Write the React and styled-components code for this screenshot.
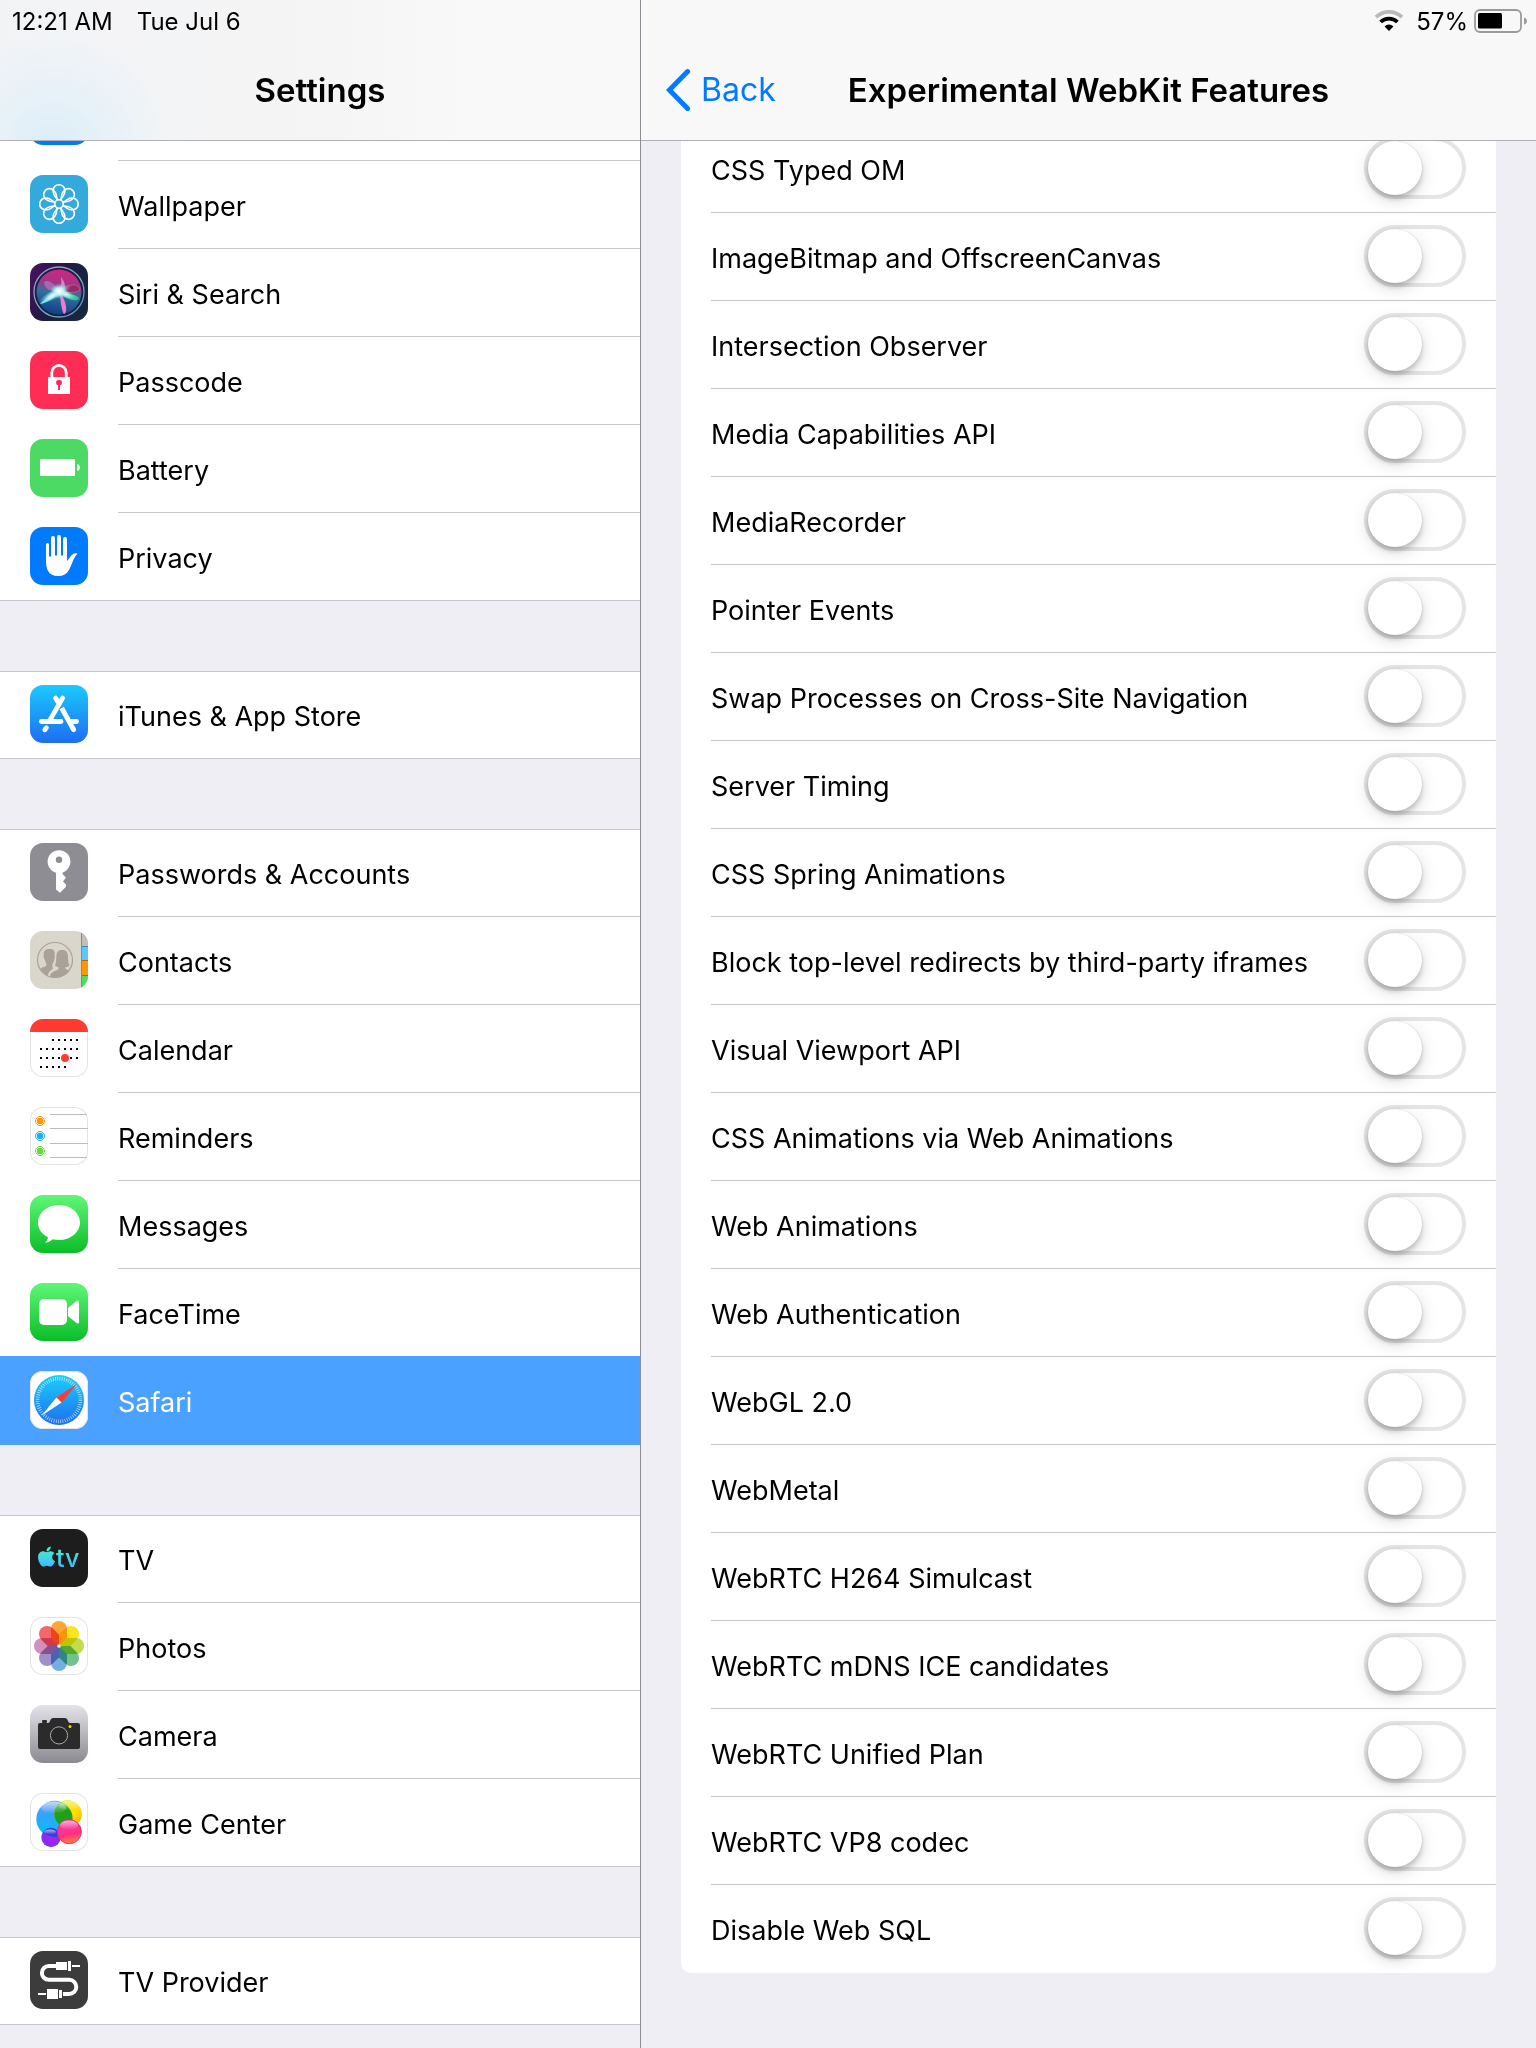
import React from "react";
import styled, { createGlobalStyle } from "styled-components";
import { FaApple } from "react-icons/fa";

const GlobalStyle = createGlobalStyle`
  * {
    box-sizing: border-box;
  }

  body {
    margin: 0;
    background: #efeef5;
    color: #000000;
    font-family: Inter, "Liberation Sans", sans-serif;
    font-size: 27px;
  }
`;

const Screen = styled.div`
  display: grid;
  grid-template-columns: minmax(0, 5fr) minmax(0, 7fr);
  min-height: 100vh;
`;

const Pane = styled.section`
  display: flex;
  flex-direction: column;
  border-left: ${props => (props.$divided ? "1px solid #8e8d93" : "none")};
`;

const Header = styled.header`
  border-bottom: 1px solid #b0afb3;
  background: ${props =>
    props.$tinted
      ? "radial-gradient(circle at 54px 150px, #d8edf7 0, #e6f1f9 50px, rgba(240, 243, 248, 0) 120px), linear-gradient(90deg, #f2f3f5 0, #f5f5f5 50%, #f9f9f9 75%)"
      : "#f8f8f8"};
`;

const StatusBar = styled.div`
  display: flex;
  align-items: center;
  justify-content: ${props => props.$align || "flex-start"};
  height: 42px;
  padding: 0 8px 0 12px;
  font-size: 24px;
`;

const Clock = styled.span`
  margin-right: 24px;
`;

const Charge = styled.span`
  margin: 0 6px 0 12px;
`;

const NavBar = styled.div`
  display: grid;
  grid-template-columns: 1fr auto 1fr;
  align-items: center;
  height: 98px;
  padding: 0 25px 2px;
`;

const Title = styled.h1`
  grid-column: 2;
  margin: 0;
  font-size: 33px;
  font-weight: 600;
  line-height: 40px;
`;

const BackButton = styled.button`
  display: flex;
  align-items: center;
  justify-self: start;
  gap: 8px;
  padding: 0;
  border: 0;
  background: none;
  color: #007aff;
  font: inherit;
  font-size: 32px;
  line-height: 40px;
`;

const Menu = styled.nav`
  display: flex;
  flex-direction: column;
  gap: 70px;
`;

const Group = styled.div`
  background: #ffffff;
  box-shadow: inset 0 ${props => (props.$continued ? "0" : "1px")} 0 #c8c7cc,
    inset 0 -1px 0 #c8c7cc;
`;

const RowLabel = styled.span`
  flex: 1;
  padding-bottom: 24px;
  border-bottom: 1px solid #c8c7cc;
  line-height: 34px;
`;

const MenuRow = styled.a`
  display: flex;
  align-items: flex-end;
  height: ${props => (props.$peek ? "20px" : "88px")};
  padding-left: 30px;
  overflow: hidden;
  color: inherit;
  text-decoration: none;

  &:last-child ${RowLabel} {
    border-bottom-color: transparent;
  }
`;

/* the highlight also covers the hairline above it */
const ActiveRow = styled(MenuRow)`
  isolation: isolate;
  height: 89px;
  margin-top: -1px;
  background: #4ba1ff;
  color: #ffffff;
`;

const AppIcon = styled.svg`
  flex: none;
  width: 58px;
  height: 58px;
  margin: 0 30px 16px 0;
  border-radius: 13px;
  background: ${props => props.$background};
`;

const OutlinedIcon = styled(AppIcon)`
  box-shadow: 0 0 0 1px #e4e4e6 inset;
`;

const Card = styled.div`
  margin: 0 40px;
  padding-left: 30px;
  border-radius: 0 0 10px 10px;
  background: #ffffff;
`;

const FeatureRow = styled.div`
  display: flex;
  align-items: flex-end;
  height: ${props => (props.$peek ? "72px" : "88px")};
  padding-right: 30px;
  border-bottom: 1px solid #c8c7cc;
  overflow: ${props => (props.$peek ? "hidden" : "visible")};

  &:last-child {
    border-bottom-color: transparent;
  }
`;

const FeatureLabel = styled.label`
  flex: 1;
  padding-bottom: 24px;
  line-height: 34px;
`;

const Switch = styled.input`
  appearance: none;
  flex: none;
  width: 102px;
  height: 62px;
  margin: 0 0 13px;
  border: 4px solid #e5e5e5;
  border-radius: 31px;
  background: #ffffff;

  &::before {
    content: "";
    display: block;
    width: 54px;
    height: 54px;
    border-radius: 50%;
    background: #ffffff;
    box-shadow: 0 0 1px rgba(0, 0, 0, 0.2), 0 4px 5px rgba(0, 0, 0, 0.18),
      0 5px 18px rgba(0, 0, 0, 0.14);
  }

  &:checked {
    border-color: #4cd964;
    background: #4cd964;
  }

  &:checked::before {
    margin-left: auto;
  }
`;

const EIGHTHS = [0, 45, 90, 135, 180, 225, 270, 315];

const WallpaperIcon = () => (
  <AppIcon viewBox="0 0 58 58" $background="#34aadc">
    <g fill="none" stroke="#fff" strokeWidth="1.6" strokeLinejoin="round">
      {EIGHTHS.map(angle => (
        <path
          key={angle}
          d="M27.6 25 L24.4 20.4 Q23.1 18.4 23.1 15.6 A5.9 5.9 0 1 1 34.9 15.6 Q34.9 18.4 33.6 20.4 L30.4 25"
          transform={`rotate(${angle} 29 29)`}
        />
      ))}
      <circle cx="29" cy="29" r="4.2" />
    </g>
  </AppIcon>
);

const SiriIcon = () => (
  <AppIcon viewBox="0 0 58 58" $background="linear-gradient(115deg, #4a1260 0%, #1f1a45 45%, #132b3f 100%)">
    <defs>
      <linearGradient id="siriOrb" x1="0.6" y1="0" x2="0.4" y2="1">
        <stop offset="0" stopColor="#d3257f" />
        <stop offset="0.32" stopColor="#a03688" />
        <stop offset="0.55" stopColor="#31709c" />
        <stop offset="1" stopColor="#123c86" />
      </linearGradient>
      <linearGradient id="siriRing" x1="0" y1="0" x2="1" y2="1">
        <stop offset="0" stopColor="#b08bd0" />
        <stop offset="0.6" stopColor="#69b9a8" />
        <stop offset="1" stopColor="#5d7fbe" />
      </linearGradient>
      <radialGradient id="siriGlow">
        <stop offset="0" stopColor="#fff" />
        <stop offset="0.45" stopColor="#c9f8f8" stopOpacity="0.8" />
        <stop offset="1" stopColor="#6fd6e8" stopOpacity="0" />
      </radialGradient>
    </defs>
    <circle cx="29" cy="29" r="25" fill="#1b1c48" stroke="url(#siriRing)" strokeWidth="1.3" />
    <circle cx="29" cy="29" r="22.5" fill="url(#siriOrb)" />
    <path d="M29 29 C38 20 49 20 50 27 C45 31 36 29 29 29Z" fill="#93295d" stroke="#e28bb5" strokeWidth="0.5" opacity="0.8" />
    <path d="M29 28 C22 16 14 17 14 20 C15 27 22 29 29 28Z" fill="#c783c9" opacity="0.55" />
    <path d="M29 28 C24 30 14 36 10 41 C17 40 25 35 29 28Z" fill="#5be9ec" />
    <path d="M29 28 C33 34 43 40 49 36 C48 31 36 31 29 28Z" fill="#2fc991" />
    <path d="M29 28 C31 37 31 47 34 51 C38 50 37 38 29 28Z" fill="#e77ed0" />
    <path d="M28 30 C31 24 32 20 31 14 C36 20 36 26 33 30Z" fill="#ee9bd0" opacity="0.75" />
    <ellipse cx="25" cy="31" rx="18" ry="5" fill="url(#siriGlow)" transform="rotate(-28 25 31)" />
    <ellipse cx="33" cy="30" rx="14" ry="4.5" fill="url(#siriGlow)" transform="rotate(22 33 30)" />
    <circle cx="29" cy="28" r="8" fill="url(#siriGlow)" />
  </AppIcon>
);

const PasscodeIcon = () => (
  <AppIcon viewBox="0 0 58 58" $background="#ff2d55">
    <path d="M21.8 27 V21.5 A7.2 7.2 0 0 1 36.2 21.5 V27" fill="none" stroke="#fff" strokeWidth="2.8" />
    <rect x="18" y="26" width="22" height="17" fill="#fff" />
    <circle cx="29" cy="31.6" r="2.9" fill="#ff2d55" />
    <rect x="28" y="32" width="2" height="7" fill="#ff2d55" />
  </AppIcon>
);

const BatteryIcon = () => (
  <AppIcon viewBox="0 0 58 58" $background="#4cd964">
    <rect x="10" y="20" width="35" height="17" rx="1" fill="#fff" />
    <path d="M47 25 C51 26 51 31 47 32Z" fill="#fff" />
  </AppIcon>
);

const PrivacyIcon = () => (
  <AppIcon viewBox="0 0 58 58" $background="#007aff">
    <path
      fill="#fff"
      d="M16 17.4 a1.5 1.5 0 0 1 3 0 V29.5 H21 V11 a2 2 0 0 1 4 0 V28.5 H27 V10 a2 2 0 0 1 4 0 V28.5 H33 V12 a2 2 0 0 1 4 0 V34 L41.5 28.2 Q44 25.5 47.5 26.4 Q45 29 43.5 32.5 Q41 39 39 43 Q35.5 49 28.5 49 Q20 49 17.5 43 Q16 39.5 16 34Z"
    />
  </AppIcon>
);

const StoreIcon = () => (
  <AppIcon viewBox="0 0 58 58" $background="linear-gradient(#1bcafc, #1d6df1)">
    <g fill="none" stroke="#fff" strokeWidth="4.8" strokeLinecap="round">
      <path d="M32.6 13 L20.3 34.4 M25.6 13 L28.4 17.8" />
      <path d="M31.7 23 L43.5 44.5" strokeLinecap="butt" />
      <path d="M43 43.5 L43.7 44.7" />
      <path d="M11.4 36.5 H31 M41.5 36.5 H46.6" />
      <path d="M16.4 42.8 L14.8 44.8" />
    </g>
  </AppIcon>
);

const KeyIcon = () => (
  <AppIcon viewBox="0 0 58 58" $background="#8e8d93">
    <circle cx="29" cy="18.6" r="11.4" fill="#fff" />
    <path d="M26 28 H32.5 V31 L36 34.5 L33 38.5 L36 41.5 V43.8 L30 49.8 L26 46.5Z" fill="#fff" />
    <circle cx="29" cy="16.8" r="3.2" fill="#8e8d93" />
  </AppIcon>
);

const ContactsIcon = () => (
  <AppIcon viewBox="0 0 58 58" $background="#d9d6cb">
    <rect x="51" width="7" height="15" fill="#c2bdb6" />
    <rect x="51" y="15" width="7" height="14" fill="#5ac8fa" />
    <rect x="51" y="29" width="7" height="15" fill="#ff9500" />
    <rect x="51" y="44" width="7" height="14" fill="#4cd964" />
    <path d="M51.5 2 V56" stroke="#8b8982" strokeWidth="1" />
    <path d="M52 15.5 H58 M52 29.5 H58 M52 44.5 H58" stroke="#000" strokeOpacity="0.3" strokeWidth="1" />
    <circle cx="25" cy="29" r="17.5" fill="none" stroke="#aaa298" strokeWidth="1.2" />
    <g fill="#aaa298">
      <path d="M19 18 C15 18 13.4 20.5 13.8 24 C13.2 25 14 28 15 29 C15.5 31.5 16.4 32.5 16.5 34 C16 36 12.5 36 10.5 37.5 Q13.5 43 18 45 C18 40 22 39 23 37.5 C22 35.5 22 33.5 23.5 31 C24.5 28 25.2 26 24.5 24 C25.5 20 23.5 17.5 19 18Z" />
      <path d="M32 19 C36 18.5 37.8 21 38 26 C38 30 38.6 33 39.5 34.5 C38 36 35.6 36 35 36.5 C35 38.5 38.5 38.5 39.5 39.5 C36 44.5 30.5 46.5 25 46.5 Q22 46.3 20 45.4 C20.5 40 27 40 28.5 38 V36.2 Q26 36 25 34.6 C26.5 31 26 28.5 26.4 25 C26.6 21 28.5 18.8 32 19Z" />
    </g>
  </AppIcon>
);

const CALENDAR_DOTS = [
  { y: 20, from: 2, to: 6 },
  { y: 29, from: 0, to: 6 },
  { y: 38, from: 0, to: 6 },
  { y: 47, from: 0, to: 4 }
];

const CalendarIcon = () => (
  <OutlinedIcon viewBox="0 0 58 58" $background="#fff">
    <rect width="58" height="13" fill="#ff3b30" />
    {CALENDAR_DOTS.map(row =>
      [0, 1, 2, 3, 4, 5, 6]
        .filter(col => col >= row.from && col <= row.to)
        .map(col => <rect key={`${row.y}-${col}`} x={10 + col * 6} y={row.y} width="2" height="2" />)
    )}
    <circle cx="35" cy="39" r="4" fill="#ff3b30" />
  </OutlinedIcon>
);

const RemindersIcon = () => (
  <OutlinedIcon viewBox="0 0 58 58" $background="#fff">
    <path d="M20 7.5 H57 M20 21.5 H58 M20 36.5 H58 M20 50.5 H57" stroke="#bdbdc1" />
    {[["#ff9500", 14], ["#1badf8", 29], ["#63da38", 44]].map(([color, y]) => (
      <g key={color}>
        <circle cx="10" cy={y} r="4.5" fill="none" stroke={color} strokeWidth="1" />
        <circle cx="10" cy={y} r="3.2" fill={color} />
      </g>
    ))}
  </OutlinedIcon>
);

const MessagesIcon = () => (
  <AppIcon viewBox="0 0 58 58" $background="linear-gradient(#5ff777, #0bbd29)">
    <path
      fill="#fff"
      d="M29 10 C40.6 10 50 17.8 50 27.5 S40.6 45 29 45 Q25.5 45 22.8 44.3 Q19.5 47.5 15.2 47.8 Q17.8 45.5 18 42.3 C11.8 39.3 8 33.8 8 27.5 C8 17.8 17.4 10 29 10Z"
    />
  </AppIcon>
);

const FaceTimeIcon = () => (
  <AppIcon viewBox="0 0 58 58" $background="linear-gradient(#5ff777, #0bbd29)">
    <rect x="9" y="16" width="28" height="26" rx="5" fill="#fff" />
    <path d="M38 26 Q38 24.8 39 24 L46.6 18 Q49 16.6 49 19 V39 Q49 41.4 46.6 40 L39 34 Q38 33.2 38 32Z" fill="#fff" />
  </AppIcon>
);

const SafariIcon = () => (
  <OutlinedIcon viewBox="0 0 58 58" $background="#fff">
    <defs>
      <linearGradient id="safariDial" x1="0" y1="0" x2="0" y2="1">
        <stop offset="0" stopColor="#1bcffb" />
        <stop offset="1" stopColor="#1e6ef1" />
      </linearGradient>
    </defs>
    <circle cx="29" cy="29" r="25" fill="url(#safariDial)" />
    <circle cx="29" cy="29" r="21.4" fill="none" stroke="#fff" strokeWidth="3.6" strokeDasharray="0.7 1.54" opacity="0.75" />
    <path d="M47 13 L26.4 26.4 L31.6 31.6Z" fill="#ff3b30" />
    <path d="M11.5 44.8 L26.4 26.4 L31.6 31.6Z" fill="#fff" />
  </OutlinedIcon>
);

const TvWord = styled.text`
  font-family: Inter, sans-serif;
  font-size: 25px;
  font-weight: 500;
`;

const TvIcon = () => (
  <AppIcon viewBox="0 0 58 58" $background="#1d1d1d">
    <defs>
      <linearGradient id="tvInk" gradientUnits="userSpaceOnUse" x1="0" y1="18" x2="0" y2="38">
        <stop offset="0" stopColor="#4df2c5" />
        <stop offset="1" stopColor="#3fb9ff" />
      </linearGradient>
      <linearGradient id="tvApple" x1="0" y1="0" x2="0" y2="1">
        <stop offset="0" stopColor="#4df2c5" />
        <stop offset="1" stopColor="#3fb9ff" />
      </linearGradient>
    </defs>
    <FaApple x="5" y="16" size="23" fill="url(#tvApple)" />
    <TvWord x="26" y="38" fill="url(#tvInk)">tv</TvWord>
  </AppIcon>
);

const Petal = styled.path`
  mix-blend-mode: multiply;
`;

const PETAL_COLORS = ["#fba636", "#fae420", "#c1dc4c", "#6fc48e", "#74afe2", "#a28fc9", "#d38fbd", "#f4686a"];

const PhotosIcon = () => (
  <OutlinedIcon viewBox="0 0 58 58" $background="#fff">
    {PETAL_COLORS.map((color, i) => (
      <Petal
        key={color}
        d="M29 29 L21 21 V12 A8 8 0 0 1 37 12 V21Z"
        fill={color}
        transform={`rotate(${i * 45} 29 29)`}
      />
    ))}
    <circle cx="29" cy="29" r="1.8" fill="#fff" />
  </OutlinedIcon>
);

const CameraIcon = () => (
  <AppIcon viewBox="0 0 58 58" $background="linear-gradient(#e4e3e9, #8b8a90)">
    <rect x="12" y="15" width="5" height="3" rx="1" fill="#2b2b2b" />
    <path
      d="M10 18 H18 Q19.5 18 20 16 Q20.8 13 23 13 H35 Q37.2 13 38 16 Q38.5 18 40 18 H48 Q50 18 50 20 V42 Q50 44 48 44 H10 Q8 44 8 42 V20 Q8 18 10 18Z"
      fill="#2b2b2b"
    />
    <circle cx="29" cy="30.4" r="8.6" fill="#262626" stroke="#a9a9ac" strokeWidth="1" />
    <circle cx="40" cy="21.5" r="1.5" fill="#ffcc00" />
  </AppIcon>
);

const GameCenterIcon = () => (
  <OutlinedIcon viewBox="0 0 58 58" $background="#fff">
    <defs>
      <linearGradient id="gcBlue" x1="0" y1="0" x2="0" y2="1">
        <stop offset="0" stopColor="#7d9cf0" />
        <stop offset="0.4" stopColor="#2fa4fb" />
        <stop offset="1" stopColor="#00c3ff" />
      </linearGradient>
      <linearGradient id="gcYellow" x1="0" y1="0" x2="1" y2="1">
        <stop offset="0" stopColor="#d3ea00" />
        <stop offset="0.6" stopColor="#ffde00" />
        <stop offset="1" stopColor="#f5a600" />
      </linearGradient>
      <linearGradient id="gcPink" x1="0.4" y1="0" x2="0.6" y2="1">
        <stop offset="0" stopColor="#f63fb4" />
        <stop offset="0.6" stopColor="#ff2f80" />
        <stop offset="1" stopColor="#ff8740" />
      </linearGradient>
      <radialGradient id="gcPurple">
        <stop offset="0" stopColor="#b81cf8" />
        <stop offset="0.6" stopColor="#9a22f2" />
        <stop offset="1" stopColor="#6a3ff0" />
      </radialGradient>
      <linearGradient id="gcShine" x1="0" y1="0" x2="0" y2="1">
        <stop offset="0" stopColor="#fff" stopOpacity="0.6" />
        <stop offset="1" stopColor="#fff" stopOpacity="0" />
      </linearGradient>
      <clipPath id="gcBlueClip">
        <circle cx="24.5" cy="26" r="18.2" />
      </clipPath>
    </defs>
    <circle cx="21" cy="44.5" r="9.7" fill="url(#gcPurple)" />
    <circle cx="24.5" cy="26" r="18.2" fill="url(#gcBlue)" />
    <circle cx="38" cy="21" r="13.8" fill="url(#gcYellow)" />
    <g clipPath="url(#gcBlueClip)">
      <circle cx="38" cy="21" r="13.8" fill="#1f9f1b" />
      <circle cx="21" cy="44.5" r="9.7" fill="#3b3fd8" />
    </g>
    <ellipse cx="24" cy="14.5" rx="12.5" ry="6" fill="url(#gcShine)" />
    <ellipse cx="39" cy="12.5" rx="10" ry="4.8" fill="url(#gcShine)" />
    <circle cx="39.3" cy="38.7" r="12.3" fill="url(#gcPink)" />
    <circle cx="39.3" cy="38.7" r="12" fill="none" stroke="#e11d62" strokeWidth="0.6" />
    <ellipse cx="39" cy="32" rx="9" ry="4.5" fill="url(#gcShine)" />
    <ellipse cx="20" cy="39" rx="6" ry="2.5" fill="url(#gcShine)" />
  </OutlinedIcon>
);

const ProviderIcon = () => (
  <AppIcon viewBox="0 0 58 58" $background="#3c3c3c">
    <path
      d="M26 15 H18.8 A6.9 6.9 0 0 0 18.8 28.8 H39.2 A7.1 7.1 0 0 1 39.2 43 H33"
      fill="none"
      stroke="#fff"
      strokeWidth="4"
    />
    <g fill="#fff">
      <rect x="26" y="11" width="11" height="8" />
      <rect x="38" y="10" width="3" height="10" />
      <rect x="42" y="14" width="8" height="2" />
      <rect x="17" y="38" width="11" height="10" />
      <rect x="29" y="39" width="3" height="8" />
      <rect x="8" y="42" width="8" height="2" />
    </g>
  </AppIcon>
);

const DisplayIcon = () => <AppIcon viewBox="0 0 58 58" $background="#007aff" />;

const Wifi = () => (
  <svg width="30" height="22" viewBox="0 0 30 22" role="img" aria-label="Wi-Fi">
    <path d="M2 7.2 A18.5 18.5 0 0 1 28 7.2" fill="none" stroke="#b9b9b9" strokeWidth="3.8" />
    <path d="M6.6 12 A12 12 0 0 1 23.4 12" fill="none" stroke="#000" strokeWidth="3.8" />
    <path d="M15 21 L10.6 16.4 A6.3 6.3 0 0 1 19.4 16.4Z" />
  </svg>
);

const BatteryLevel = () => (
  <svg width="54" height="24" viewBox="0 0 54 24" role="img" aria-label="Battery">
    <rect x="1" y="1" width="46" height="22" rx="5" fill="none" stroke="#9b9b9b" strokeWidth="1.8" />
    <rect x="4" y="4" width="24" height="15.5" rx="1.5" />
    <path d="M50 8.5 C54 9.5 54 14.5 50 15.5Z" fill="#9b9b9b" />
  </svg>
);

const Chevron = () => (
  <svg width="27" height="44" viewBox="0 0 27 44" aria-hidden="true">
    <path d="M21.6 3.6 L3.4 22 L21.6 40.4" fill="none" stroke="#007aff" strokeWidth="5" strokeLinecap="round" />
  </svg>
);

const GROUPS = [
  [
    { name: "Display & Brightness", Icon: DisplayIcon, peek: true },
    { name: "Wallpaper", Icon: WallpaperIcon },
    { name: "Siri & Search", Icon: SiriIcon },
    { name: "Passcode", Icon: PasscodeIcon },
    { name: "Battery", Icon: BatteryIcon },
    { name: "Privacy", Icon: PrivacyIcon }
  ],
  [{ name: "iTunes & App Store", Icon: StoreIcon }],
  [
    { name: "Passwords & Accounts", Icon: KeyIcon },
    { name: "Contacts", Icon: ContactsIcon },
    { name: "Calendar", Icon: CalendarIcon },
    { name: "Reminders", Icon: RemindersIcon },
    { name: "Messages", Icon: MessagesIcon },
    { name: "FaceTime", Icon: FaceTimeIcon },
    { name: "Safari", Icon: SafariIcon, active: true }
  ],
  [
    { name: "TV", Icon: TvIcon },
    { name: "Photos", Icon: PhotosIcon },
    { name: "Camera", Icon: CameraIcon },
    { name: "Game Center", Icon: GameCenterIcon }
  ],
  [{ name: "TV Provider", Icon: ProviderIcon }]
];

const FEATURES = [
  "CSS Typed OM",
  "ImageBitmap and OffscreenCanvas",
  "Intersection Observer",
  "Media Capabilities API",
  "MediaRecorder",
  "Pointer Events",
  "Swap Processes on Cross-Site Navigation",
  "Server Timing",
  "CSS Spring Animations",
  "Block top-level redirects by third-party iframes",
  "Visual Viewport API",
  "CSS Animations via Web Animations",
  "Web Animations",
  "Web Authentication",
  "WebGL 2.0",
  "WebMetal",
  "WebRTC H264 Simulcast",
  "WebRTC mDNS ICE candidates",
  "WebRTC Unified Plan",
  "WebRTC VP8 codec",
  "Disable Web SQL"
];

const MenuItem = ({ name, Icon, active, peek }) => {
  const Row = active ? ActiveRow : MenuRow;
  return (
    <Row href="#" $peek={peek} aria-label={name}>
      <Icon />
      <RowLabel>{peek ? "" : name}</RowLabel>
    </Row>
  );
};

const Feature = ({ name, index }) => (
  <FeatureRow $peek={index === 0}>
    <FeatureLabel htmlFor={`feature-${index}`}>{name}</FeatureLabel>
    <Switch type="checkbox" role="switch" id={`feature-${index}`} />
  </FeatureRow>
);

const App = () => (
  <>
    <GlobalStyle />
    <Screen>
      <Pane>
        <Header $tinted>
          <StatusBar>
            <Clock>12:21 AM</Clock>
            <span>Tue Jul 6</span>
          </StatusBar>
          <NavBar>
            <Title>Settings</Title>
          </NavBar>
        </Header>
        <Menu>
          {GROUPS.map((group, i) => (
            <Group key={i} $continued={i === 0}>
              {group.map(item => (
                <MenuItem key={item.name} {...item} />
              ))}
            </Group>
          ))}
        </Menu>
      </Pane>
      <Pane $divided>
        <Header>
          <StatusBar $align="flex-end">
            <Wifi />
            <Charge>57%</Charge>
            <BatteryLevel />
          </StatusBar>
          <NavBar>
            <BackButton type="button">
              <Chevron />
              Back
            </BackButton>
            <Title as="h2">Experimental WebKit Features</Title>
          </NavBar>
        </Header>
        <Card>
          {FEATURES.map((name, i) => (
            <Feature key={name} name={name} index={i} />
          ))}
        </Card>
      </Pane>
    </Screen>
  </>
);

export default App;
